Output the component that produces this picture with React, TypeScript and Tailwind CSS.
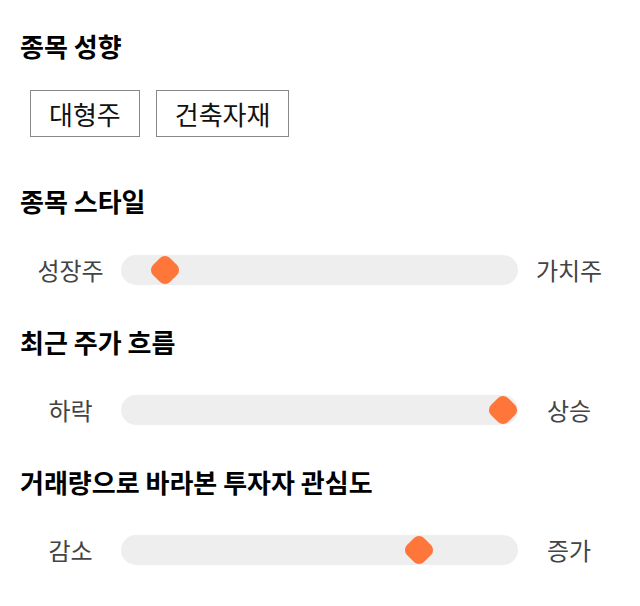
import React from 'react';

interface SliderRowProps {
  left: string;
  right: string;
  value: number; // 0..100
}

const SliderRow: React.FC<SliderRowProps> = ({ left, right, value }) => {
  return (
    <div className="flex items-center h-[30px]">
      <div className="w-[101px] text-center text-[24px] leading-none text-[#444]">{left}</div>
      <div className="relative flex-1 h-[30px] rounded-full bg-[#eeeeee]">
        <div
          className="absolute top-1/2 w-[24px] h-[24px] -translate-x-1/2 -translate-y-1/2 rotate-45 rounded-[7px] bg-[#ff763b]"
          style={{ left: `calc(15px + (100% - 30px) * ${value / 100})` }}
        />
      </div>
      <div className="w-[102px] text-center text-[24px] leading-none text-[#444]">{right}</div>
    </div>
  );
};

const SectionTitle: React.FC<{ children: React.ReactNode; className?: string }> = ({ children, className = '' }) => (
  <h2 className={`text-[26px] font-bold leading-9 text-black ${className}`}>{children}</h2>
);

export default function App() {
  return (
    <div className="w-[640px] h-[606px] bg-white px-5 pt-7 font-['Noto_Sans_CJK_KR','Noto_Sans',sans-serif]">
      {/* 종목 성향 */}
      <SectionTitle>종목 성향</SectionTitle>
      <div className="mt-[26px] flex gap-4 pl-[10px]">
        {['대형주', '건축자재'].map(tag => (
          <div
            key={tag}
            className="h-[47px] px-[18px] flex items-center border border-[#888] text-[26px] leading-none text-[#111]"
          >
            {tag}
          </div>
        ))}
      </div>

      {/* 종목 스타일 */}
      <SectionTitle className="mt-[46px]">종목 스타일</SectionTitle>
      <div className="mt-[36px]">
        <SliderRow left="성장주" right="가치주" value={8} />
      </div>

      {/* 최근 주가 흐름 */}
      <SectionTitle className="mt-[39px]">최근 주가 흐름</SectionTitle>
      <div className="mt-[35px]">
        <SliderRow left="하락" right="상승" value={100} />
      </div>

      {/* 거래량 */}
      <SectionTitle className="mt-[39px]">거래량으로 바라본 투자자 관심도</SectionTitle>
      <div className="mt-[35px]">
        <SliderRow left="감소" right="증가" value={77} />
      </div>
    </div>
  );
}
